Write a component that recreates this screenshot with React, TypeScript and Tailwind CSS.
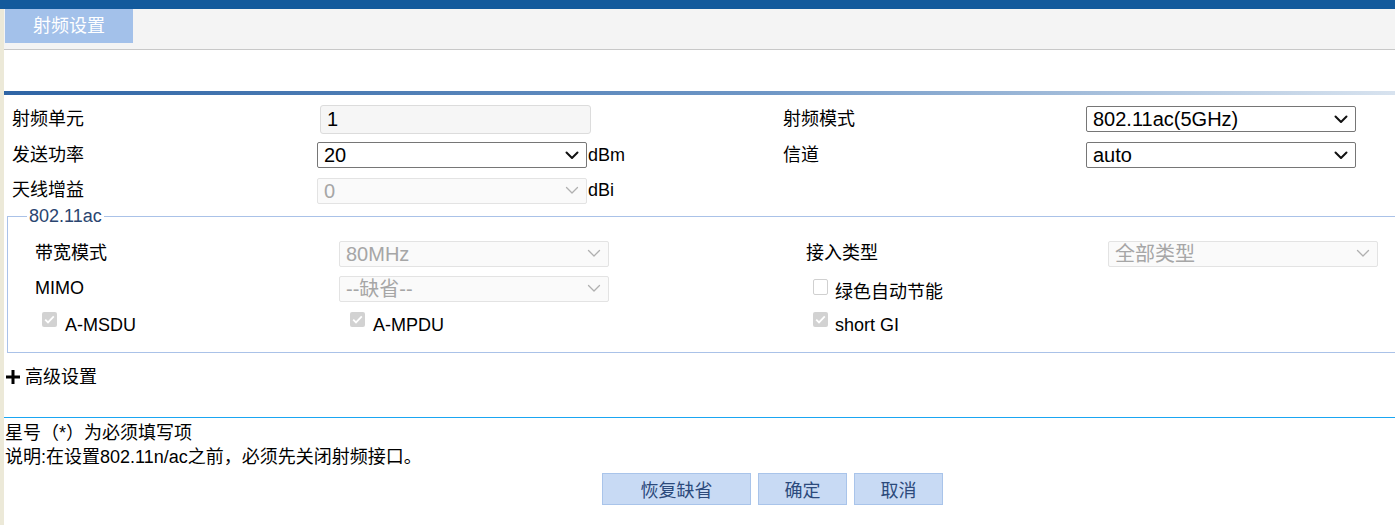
import React from 'react';

const font = 'font-["Liberation_Sans","Noto_Sans_CJK_SC",sans-serif]';

const Chevron = ({ disabled }: { disabled?: boolean }) => (
  <svg width="14" height="9" viewBox="0 0 14 9" className="shrink-0">
    <path
      d="M1.5 1.5 L7 7 L12.5 1.5"
      fill="none"
      stroke={disabled ? '#b0b0b0' : '#111'}
      strokeWidth={disabled ? 1.3 : 2}
      strokeLinecap="round"
      strokeLinejoin="round"
    />
  </svg>
);

const FakeSelect = ({ value, disabled }: { value: string; disabled?: boolean }) => (
  <div
    className={
      'flex h-[26px] w-[270px] items-center justify-between rounded-[2px] border pl-[6px] pr-[7px] text-[20px] leading-none ' +
      (disabled ? 'border-[#e3e3e3] bg-[#fafafa] text-[#a6a6a6]' : 'border-[#767676] bg-white text-black')
    }
  >
    <span>{value}</span>
    <Chevron disabled={disabled} />
  </div>
);

const Check = ({ checked, className = '' }: { checked?: boolean; className?: string }) =>
  checked ? (
    <span className={`flex h-[15px] w-[15px] shrink-0 items-center justify-center rounded-[2px] bg-[#d2d2d2] ${className}`}>
      <svg width="11" height="9" viewBox="0 0 11 9">
        <path d="M1.2 4.6 L4 7.4 L9.8 1.4" fill="none" stroke="#fff" strokeWidth="1.8" />
      </svg>
    </span>
  ) : (
    <span className={`h-[16px] w-[15px] shrink-0 rounded-[2px] border border-[#d0d0d0] bg-white ${className}`} />
  );

export default function App() {
  return (
    <div className={`min-h-[525px] w-[1395px] overflow-hidden bg-white text-[18px] text-black ${font}`}>
      <div className="h-[9px] bg-[#135a9c]" />
      <div className="min-h-[516px] border-l-[4px] border-[#ece9d8]">
        {/* tab bar */}
        <div className="h-[41px] border-b border-[#c8c8c8] bg-[#f4f4f4] pl-[1px]">
          <div className="flex h-[34px] w-[128px] items-center justify-center bg-[#a3c1ea] text-[18px] text-white">
            射频设置
          </div>
        </div>

        <div className="mt-[41px] h-[4px] bg-[linear-gradient(to_right,#2f65a5,#6f97c6_55%,#d8e3ef)]" />

        {/* main settings */}
        <div className="grid grid-cols-[305px_466px_303px_1fr] pl-[8px] pt-[6px]">
          <div className="flex h-[36px] items-center">射频单元</div>
          <div className="flex h-[36px] items-center">
            <div className="ml-[3px] flex h-[29px] w-[271px] items-center rounded-[3px] border border-[#dcdcdc] bg-[#f6f6f6] pl-[6px] text-[20px]">
              1
            </div>
          </div>
          <div className="flex h-[36px] items-center">射频模式</div>
          <div className="flex h-[36px] items-center">
            <FakeSelect value="802.11ac(5GHz)" />
          </div>

          <div className="flex h-[36px] items-center">发送功率</div>
          <div className="flex h-[36px] items-center gap-[1px]">
            <FakeSelect value="20" />
            <span>dBm</span>
          </div>
          <div className="flex h-[36px] items-center">信道</div>
          <div className="flex h-[36px] items-center">
            <FakeSelect value="auto" />
          </div>

          <div className="flex h-[35px] items-center">天线增益</div>
          <div className="flex h-[35px] items-center gap-[1px]">
            <FakeSelect value="0" disabled />
            <span>dBi</span>
          </div>
          <div />
          <div />
        </div>

        {/* 802.11ac group */}
        <fieldset className="mr-[-6px] ml-[3px] mt-[-2px] border border-[#aac2e8] pb-[10px]">
          <legend className="ml-[19px] px-[2px] text-[18px] leading-[20px] text-[#2a4570]">802.11ac</legend>
          <div className="grid grid-cols-[304px_467px_302px_1fr] pl-[27px] pt-[10px]">
            <div className="flex h-[35px] items-center">带宽模式</div>
            <div className="flex h-[35px] items-center">
              <FakeSelect value="80MHz" disabled />
            </div>
            <div className="flex h-[35px] items-center">接入类型</div>
            <div className="flex h-[35px] items-center">
              <FakeSelect value="全部类型" disabled />
            </div>

            <div className="flex h-[35px] items-center">MIMO</div>
            <div className="flex h-[35px] items-center">
              <FakeSelect value="--缺省--" disabled />
            </div>
            <div className="flex h-[35px] items-start gap-[7px] pl-[7px]">
              <Check className="mt-[8px]" />
              <span className="mt-[9px] leading-[24px]">绿色自动节能</span>
            </div>
            <div />

            <div className="flex h-[36px] items-start gap-[8px] pl-[7px]">
              <Check checked className="mt-[6px]" />
              <span className="mt-[7px] leading-[24px]">A-MSDU</span>
            </div>
            <div className="flex h-[36px] items-start gap-[8px] pl-[11px]">
              <Check checked className="mt-[6px]" />
              <span className="mt-[7px] leading-[24px]">A-MPDU</span>
            </div>
            <div className="flex h-[36px] items-start gap-[7px] pl-[7px]">
              <Check checked className="mt-[6px]" />
              <span className="mt-[7px] leading-[24px]">short GI</span>
            </div>
            <div />
          </div>
        </fieldset>

        {/* advanced */}
        <div className="mt-[12px] flex h-[24px] items-center gap-[4px] pl-[1px]">
          <svg width="16" height="16" viewBox="0 0 16 16">
            <path d="M8 1 V15 M1 8 H15" stroke="#000" strokeWidth="3" />
          </svg>
          <span>高级设置</span>
        </div>

        <div className="mt-[28px] h-[1px] bg-[#1aa6f2]" />
        <div className="pl-[1px] pt-[3px] leading-[24px]">
          <div>星号（*）为必须填写项</div>
          <div>说明:在设置802.11n/ac之前，必须先关闭射频接口。</div>
        </div>

        <div className="mt-[4px] flex gap-[7px] pl-[598px] font-['Noto_Sans_CJK_SC',sans-serif] text-[18px] text-[#2c4a7c]">
          <button className="h-[32px] w-[149px] border border-[#a9c4ea] bg-[#c8daf4]">恢复缺省</button>
          <button className="h-[32px] w-[89px] border border-[#a9c4ea] bg-[#c8daf4]">确定</button>
          <button className="h-[32px] w-[89px] border border-[#a9c4ea] bg-[#c8daf4]">取消</button>
        </div>
      </div>
    </div>
  );
}
